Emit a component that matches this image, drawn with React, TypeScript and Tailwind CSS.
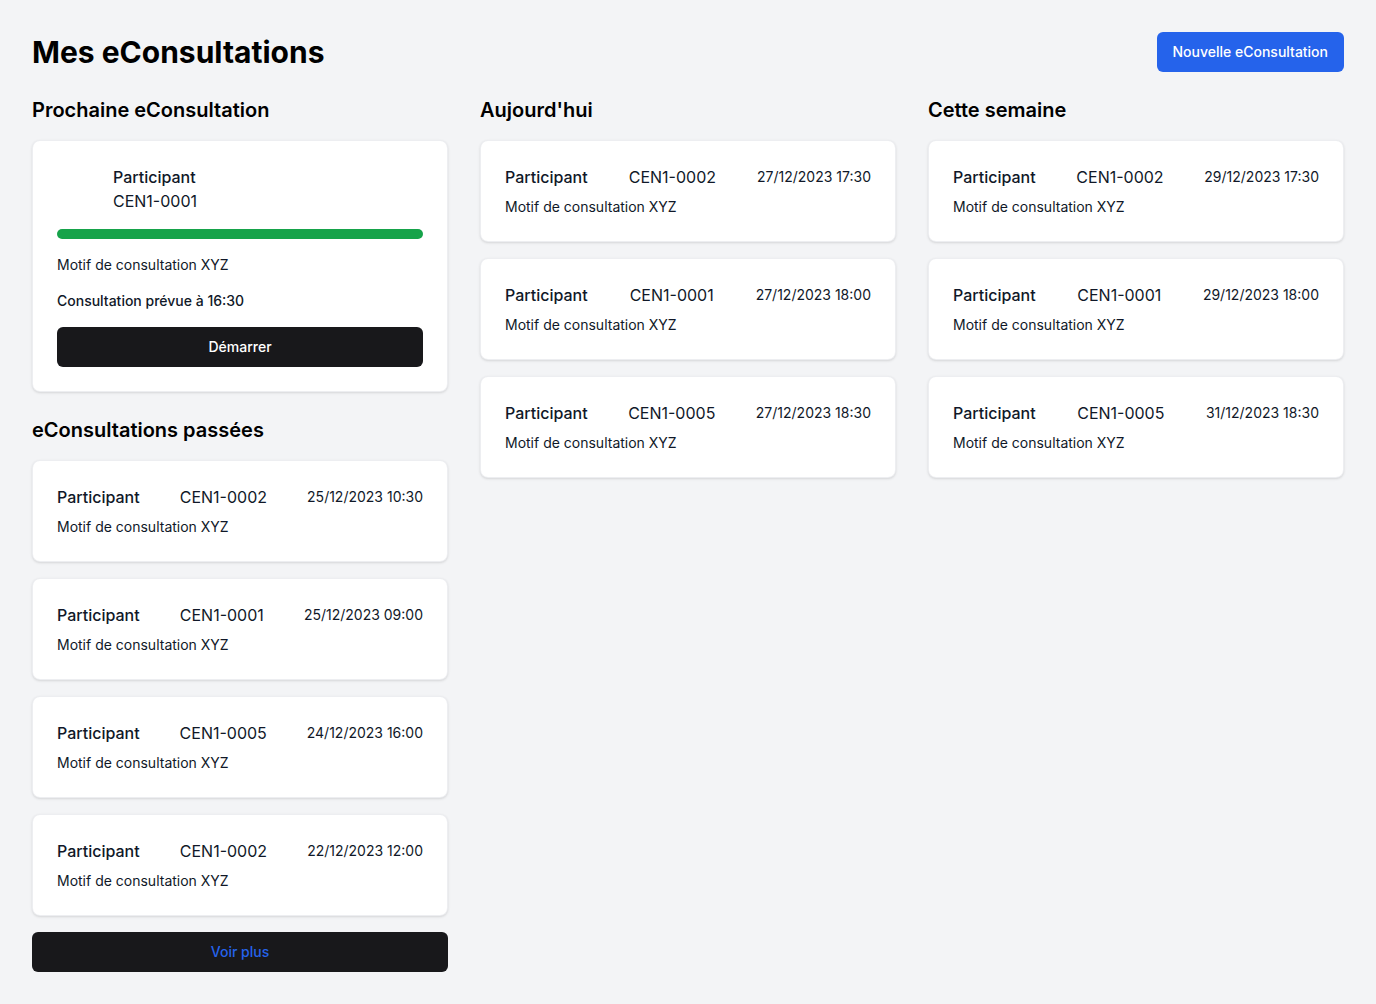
import { useState } from "react";

type Consultation = {
    id: string;
    date: string;
};

const today: Consultation[] = [
    { id: "CEN1-0002", date: "27/12/2023 17:30" },
    { id: "CEN1-0001", date: "27/12/2023 18:00" },
    { id: "CEN1-0005", date: "27/12/2023 18:30" },
];

const week: Consultation[] = [
    { id: "CEN1-0002", date: "29/12/2023 17:30" },
    { id: "CEN1-0001", date: "29/12/2023 18:00" },
    { id: "CEN1-0005", date: "31/12/2023 18:30" },
];

const past: Consultation[] = [
    { id: "CEN1-0002", date: "25/12/2023 10:30" },
    { id: "CEN1-0001", date: "25/12/2023 09:00" },
    { id: "CEN1-0005", date: "24/12/2023 16:00" },
    { id: "CEN1-0002", date: "22/12/2023 12:00" },
];

const ConsultationCard = ({ item }: { item: Consultation }) => (
    <div className="rounded-lg border border-gray-200/70 bg-white p-6 shadow-sm">
        <div className="flex h-6 items-center justify-between">
            <span className="text-base font-medium">Participant</span>
            <span className="text-base">{item.id}</span>
            <span className="text-sm">{item.date}</span>
        </div>
        <p className="mt-2 text-sm leading-5">Motif de consultation XYZ</p>
    </div>
);

const SectionTitle = ({ children }: { children: string }) => (
    <h2 className="mb-4 h-7 text-xl font-semibold leading-7 text-black">{children}</h2>
);

const App = () => {
    const [showAll, setShowAll] = useState(false);
    const pastList = showAll ? past : past.slice(0, 4);

    return (
        <main className="min-h-screen bg-gray-100 px-8 pt-8 pb-8 text-gray-900 [font-family:Inter,'Noto_Sans',sans-serif]">
            <header className="mb-6 flex h-10 items-center justify-between">
                <h1 className="text-3xl font-bold text-black">Mes eConsultations</h1>
                <button className="h-10 rounded-md bg-[#2563eb] px-4 text-sm font-medium text-white">
                    Nouvelle eConsultation
                </button>
            </header>

            <div className="grid grid-cols-3 gap-8">
                <section>
                    <SectionTitle>Prochaine eConsultation</SectionTitle>
                    <div className="rounded-lg border border-gray-200/70 bg-white p-6 shadow-sm">
                        <div className="flex items-center gap-4">
                            <div className="h-10 w-10" />
                            <div className="text-base leading-6">
                                <p className="font-medium">Participant</p>
                                <p>CEN1-0001</p>
                            </div>
                        </div>
                        <div className="mt-4 h-2.5 w-full rounded-full bg-[#16a34a]" />
                        <p className="mt-4 text-sm leading-5">Motif de consultation XYZ</p>
                        <p className="mt-4 text-sm font-medium leading-5">Consultation prévue à 16:30</p>
                        <button className="mt-4 h-10 w-full rounded-md bg-zinc-900 text-sm font-medium text-white">
                            Démarrer
                        </button>
                    </div>

                    <div className="mt-6">
                        <SectionTitle>eConsultations passées</SectionTitle>
                        <div className="flex flex-col gap-4">
                            {pastList.map((c, i) => (
                                <ConsultationCard key={i} item={c} />
                            ))}
                        </div>
                        <button
                            className="mt-4 h-10 w-full rounded-md bg-zinc-900 text-sm font-medium text-[#2563eb]"
                            onClick={() => setShowAll(!showAll)}
                        >
                            Voir plus
                        </button>
                    </div>
                </section>

                <section>
                    <SectionTitle>Aujourd'hui</SectionTitle>
                    <div className="flex flex-col gap-4">
                        {today.map((c, i) => (
                            <ConsultationCard key={i} item={c} />
                        ))}
                    </div>
                </section>

                <section>
                    <SectionTitle>Cette semaine</SectionTitle>
                    <div className="flex flex-col gap-4">
                        {week.map((c, i) => (
                            <ConsultationCard key={i} item={c} />
                        ))}
                    </div>
                </section>
            </div>
        </main>
    );
};

export default App;
